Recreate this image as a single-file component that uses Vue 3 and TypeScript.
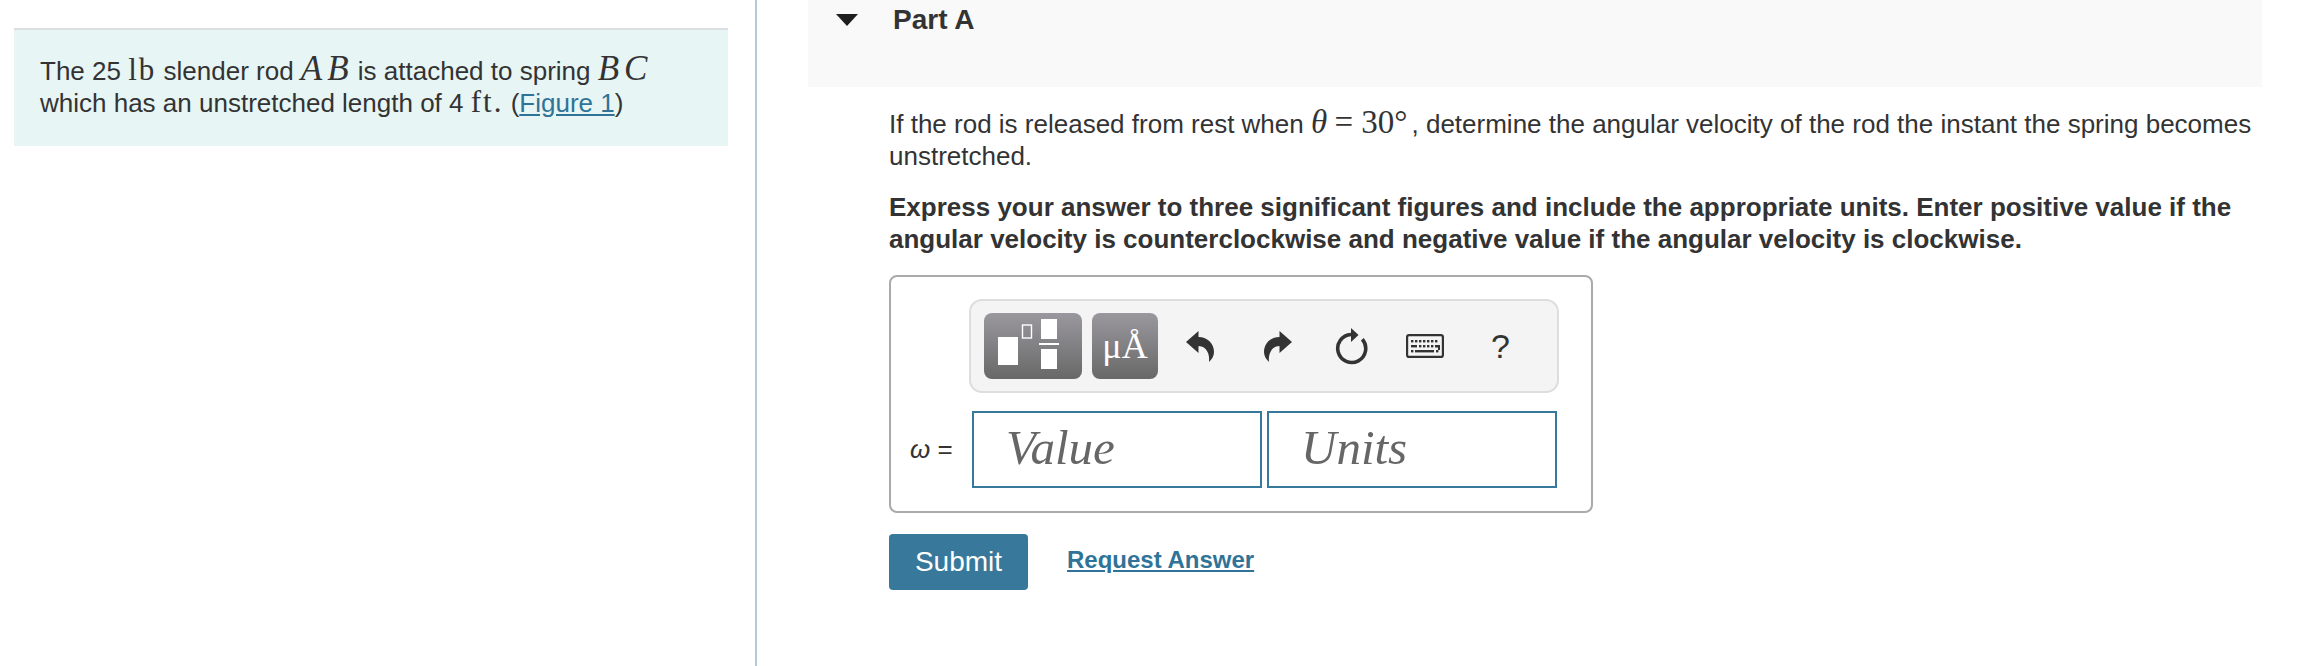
<script setup lang="ts">
const keyDots: [number, number][] = [
  [5, 6], [9, 6], [13, 6], [17, 6], [21, 6], [25, 6], [29, 6],
  [13, 11], [17, 11], [21, 11], [25, 11],
  [5, 16], [30, 16],
];
</script>

<template>
  <main class="page">
    <aside class="intro-pane">
      <div class="intro">
        <p>
          The 25 <span class="math unit">lb</span> slender rod <i class="math var">AB</i> is attached to spring
          <i class="math var">BC</i><br />which has an unstretched length of 4 <span class="math unit">ft.</span> (<a href="#">Figure 1</a>)
        </p>
      </div>
    </aside>

    <section class="part">
      <header class="part-head">
        <span class="caret"></span>
        <h2>Part A</h2>
      </header>

      <div class="part-body">
        <p class="question">
          If the rod is released from rest when <i class="math">θ</i> <span class="math eq">= 30°</span>, determine the angular velocity of the rod the instant the spring becomes<br />unstretched.
        </p>
        <p class="instructions">
          Express your answer to three significant figures and include the appropriate units. Enter positive value if the<br />angular velocity is counterclockwise and negative value if the angular velocity is clockwise.
        </p>

        <div class="answer-box">
          <div class="toolbar">
            <button type="button" class="tool-btn templates" aria-label="Templates">
              <svg width="98" height="66" viewBox="0 0 98 66">
                <rect x="14" y="24" width="20" height="28" fill="#fff" />
                <rect x="38.500" y="12" width="9" height="13" fill="none" stroke="#fff" stroke-width="1.400" />
                <rect x="57" y="6" width="16" height="20" fill="#fff" />
                <rect x="55" y="30" width="20" height="2" fill="#fff" />
                <rect x="57" y="36" width="16" height="20" fill="#fff" />
              </svg>
            </button>
            <button type="button" class="tool-btn units">μÅ</button>

            <svg class="icon undo" width="28" height="31" viewBox="0 0 28 31" aria-label="Undo">
              <path d="M0 11 12.500 0v6C22 6 28 13 28 21c0 4-2 7-5 10 1-7-2-16-10.500-16v7z" />
            </svg>
            <svg class="icon redo" width="28" height="31" viewBox="0 0 28 31" aria-label="Redo">
              <path d="M28 11 15.500 0v6C6 6 0 13 0 21c0 4 2 7 5 10-1-7 2-16 10.500-16v7z" />
            </svg>
            <svg class="icon reset" width="33" height="37" viewBox="0 0 33 37" aria-label="Reset">
              <path d="M27.300 11.300A14 14 0 1 1 16 6.500" fill="none" stroke="#333" stroke-width="3.600" />
              <path d="M16 0l7.500 7-7.500 7z" />
            </svg>
            <svg class="icon keyboard" width="38" height="24" viewBox="0 0 38 24" aria-label="Keyboard">
              <rect x="1.100" y="1.100" width="35.800" height="21.800" rx="2" fill="none" stroke="#333" stroke-width="2.200" />
              <rect v-for="(d, i) in keyDots" :key="i" :x="d[0]" :y="d[1]" width="2.400" height="2.400" />
              <rect x="5" y="11" width="6" height="2.400" />
              <path d="M29 11h5v5h-2v-2.600h-3z" />
              <rect x="9" y="16" width="19" height="2.400" />
            </svg>
            <span class="help">?</span>
          </div>

          <div class="answer-row">
            <label class="symbol"><i>ω</i> =</label>
            <div class="field">Value</div>
            <div class="field units-field">Units</div>
          </div>
        </div>

        <div class="actions">
          <button type="button" class="submit">Submit</button>
          <a href="#" class="request">Request Answer</a>
        </div>
      </div>
    </section>
  </main>
</template>

<style>
html,
body {
  margin: 0;
  background: #fff;
}
</style>

<style scoped>
.page {
  display: grid;
  grid-template-columns: 757px 1fr;
  height: 666px;
  overflow: hidden;
  color: #333;
  font-family: "Liberation Sans", Arial, sans-serif;
  font-size: 26px;
}

.intro-pane {
  padding: 28px 27px 0 14px;
  border-right: 2px solid #b7c6da;
  box-sizing: border-box;
}

.intro {
  height: 118px;
  box-sizing: border-box;
  padding: 25px 26px 0;
  border-top: 2px solid #dcdfe2;
  background: #e7f5f5;
}

p {
  margin: 0;
}

.intro p {
  line-height: 32px;
}

.math {
  font-family: "Liberation Serif", "Times New Roman", serif;
  font-size: 33px;
  line-height: 0;
}

.unit {
  font-size: 31px;
  letter-spacing: 2px;
}

.var {
  font-size: 35px;
  letter-spacing: 5px;
  margin-right: -3px;
}

.eq {
  padding-right: 4px;
}

a {
  color: #2f7498;
}

.part {
  padding: 0 42px 0 51px;
}

.part-head {
  display: flex;
  gap: 35px;
  height: 87px;
  padding: 8px 0 0 28px;
  box-sizing: border-box;
  background: #f9f9f9;
}

.caret {
  width: 0;
  height: 0;
  margin-top: 6px;
  border-top: 12px solid #1e1e1e;
  border-left: 11px solid transparent;
  border-right: 11px solid transparent;
}

h2 {
  margin: 0;
  font-size: 28px;
  line-height: 24px;
}

.part-body {
  padding: 22px 0 0 81px;
}

.question,
.instructions {
  line-height: 31.500px;
}

.instructions {
  margin-top: 20px;
  font-weight: 700;
}

.answer-box {
  width: 704px;
  height: 238px;
  margin-top: 20px;
  box-sizing: border-box;
  padding: 22px 26px 0 78px;
  border: 2px solid #aaa;
  border-radius: 8px;
}

.toolbar {
  display: flex;
  align-items: center;
  width: 590px;
  height: 94px;
  box-sizing: border-box;
  padding-left: 13px;
  border: 2px solid #ddd;
  border-radius: 13px;
  background: #f4f4f4;
}

.tool-btn {
  height: 66px;
  padding: 0;
  border: 0;
  border-radius: 8px;
  color: #fff;
  background: linear-gradient(#9a989e, #686868);
}

.templates {
  width: 98px;
}

.templates svg {
  display: block;
}

.units {
  width: 66px;
  margin-left: 10px;
  font-family: "Liberation Serif", serif;
  font-size: 36px;
}

.icon {
  flex: none;
  fill: #333;
}

.undo {
  margin-left: 28px;
}

.redo {
  margin-left: 50px;
}

.reset {
  margin-left: 43px;
}

.keyboard {
  margin-left: 38px;
}

.help {
  margin-left: 47px;
  font-size: 34px;
  color: #333;
}

.answer-row {
  display: flex;
  align-items: center;
  margin: 18px 0 0 -78px;
  padding-left: 19px;
}

.symbol {
  width: 62px;
  font-size: 26px;
  white-space: nowrap;
}

.field {
  width: 290px;
  height: 77px;
  box-sizing: border-box;
  padding-left: 32px;
  border: 2px solid #37799b;
  color: #666;
  font-family: "Liberation Serif", serif;
  font-size: 49px;
  font-style: italic;
  line-height: 70px;
}

.units-field {
  margin-left: 5px;
}

.actions {
  display: flex;
  align-items: center;
  gap: 39px;
  margin-top: 21px;
}

.submit {
  width: 139px;
  height: 56px;
  padding: 0;
  border: 0;
  border-radius: 4px;
  color: #fff;
  background: #37789b;
  font: inherit;
  font-size: 28px;
}

.request {
  margin-top: -4px;
  font-size: 24px;
  font-weight: 700;
}
</style>
